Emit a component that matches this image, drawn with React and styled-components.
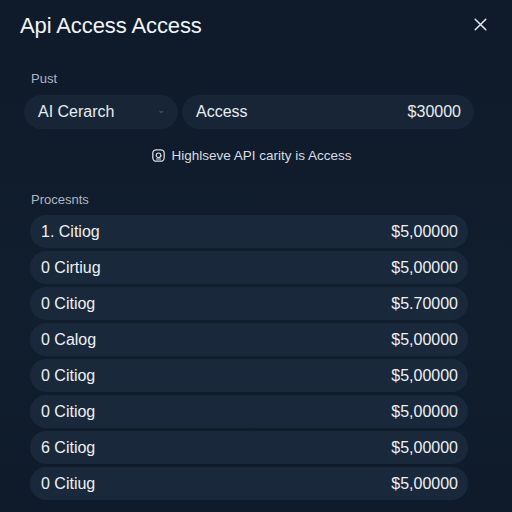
import React from "react";
import styled, { createGlobalStyle } from "styled-components";

const Global = createGlobalStyle`
  html, body {
    margin: 0;
    padding: 0;
    background: #0e1a29;
  }
  * { box-sizing: border-box; }
`;

const rows = [
  { name: "1. Citiog", price: "$5,00000" },
  { name: "0 Cirtiug", price: "$5,00000" },
  { name: "0 Citiog", price: "$5.70000" },
  { name: "0 Calog", price: "$5,00000" },
  { name: "0 Citiog", price: "$5,00000" },
  { name: "0 Citiog", price: "$5,00000" },
  { name: "6 Citiog", price: "$5,00000" },
  { name: "0 Citiug", price: "$5,00000" },
];

export default function App() {
  return (
    <Page>
      <Global />
      <Panel>
        <Header>
          <Title>Api Access Access</Title>
          <Close aria-label="close">
            <svg width="13" height="13" viewBox="0 0 13 13">
              <path d="M1.2 1.2 L11.8 11.8 M11.8 1.2 L1.2 11.8" stroke="#e6ebf1" strokeWidth="1.5" strokeLinecap="round" />
            </svg>
          </Close>
        </Header>

        <Label>Pust</Label>
        <InputRow>
          <Field $w="154px">
            <span>AI Cerarch</span>
            <Chevron>⌄</Chevron>
          </Field>
          <Field $w="292px">
            <span>Access</span>
            <span>$30000</span>
          </Field>
        </InputRow>

        <Info>
          <svg width="13" height="13" viewBox="0 0 13 13">
            <rect x="0.8" y="0.8" width="11.4" height="11.4" rx="3.5" fill="none" stroke="#d4dae2" strokeWidth="1.3" />
            <circle cx="6.5" cy="6.3" r="2.3" fill="none" stroke="#d4dae2" strokeWidth="1.2" />
            <path d="M8.8 6.3 v1.6 M4 10 h5" stroke="#d4dae2" strokeWidth="1.1" />
          </svg>
          Highlseve API carity is Access
        </Info>

        <Label $top="29px">Procesnts</Label>
        <List>
          {rows.map((r, i) => (
            <Row key={i}>
              <span>{r.name}</span>
              <span>{r.price}</span>
            </Row>
          ))}
        </List>
      </Panel>
    </Page>
  );
}

const Page = styled.div`
  width: 512px;
  height: 512px;
  background: linear-gradient(180deg, #0f1a2a 0%, #111e2e 60%, #0f1b2a 100%);
  font-family: "Liberation Sans", Arial, sans-serif;
  overflow: hidden;
`;

const Panel = styled.div`
  width: 502px;
  height: 500px;
  padding: 13px 0 0 0;
`;

const Header = styled.div`
  display: flex;
  align-items: center;
  justify-content: space-between;
  padding: 0 15px 0 20px;
  height: 26px;
`;

const Title = styled.h1`
  margin: 0;
  font-size: 22px;
  font-weight: 400;
  color: #f1f4f8;
  letter-spacing: -0.1px;
`;

const Close = styled.div`
  display: flex;
  align-items: center;
  justify-content: center;
  margin-top: -4px;
`;

const Label = styled.div`
  margin: ${(p) => p.$top || "32px"} 0 0 31px;
  font-size: 13px;
  color: #aeb7c3;
`;

const InputRow = styled.div`
  display: flex;
  gap: 4px;
  margin: 9px 0 0 24px;
`;

const Field = styled.div`
  width: ${(p) => p.$w};
  height: 34px;
  border-radius: 17px;
  background: #172536;
  display: flex;
  align-items: center;
  justify-content: space-between;
  padding: 0 13px 0 14px;
  font-size: 16px;
  color: #e9edf2;
`;

const Chevron = styled.span`
  font-size: 10px;
  color: #4a5868;
  margin-top: -6px;
`;

const Info = styled.div`
  display: flex;
  align-items: center;
  justify-content: center;
  gap: 6px;
  width: 504px;
  margin-top: 19px;
  font-size: 13.5px;
  color: #d7dde5;
`;

const List = styled.div`
  display: flex;
  flex-direction: column;
  gap: 3px;
  margin: 8px 0 0 30px;
  width: 438px;
`;

const Row = styled.div`
  height: 33px;
  border-radius: 16px;
  background: #19283a;
  display: flex;
  align-items: center;
  justify-content: space-between;
  padding: 0 10px 0 11px;
  font-size: 16px;
  color: #eef1f5;
`;
